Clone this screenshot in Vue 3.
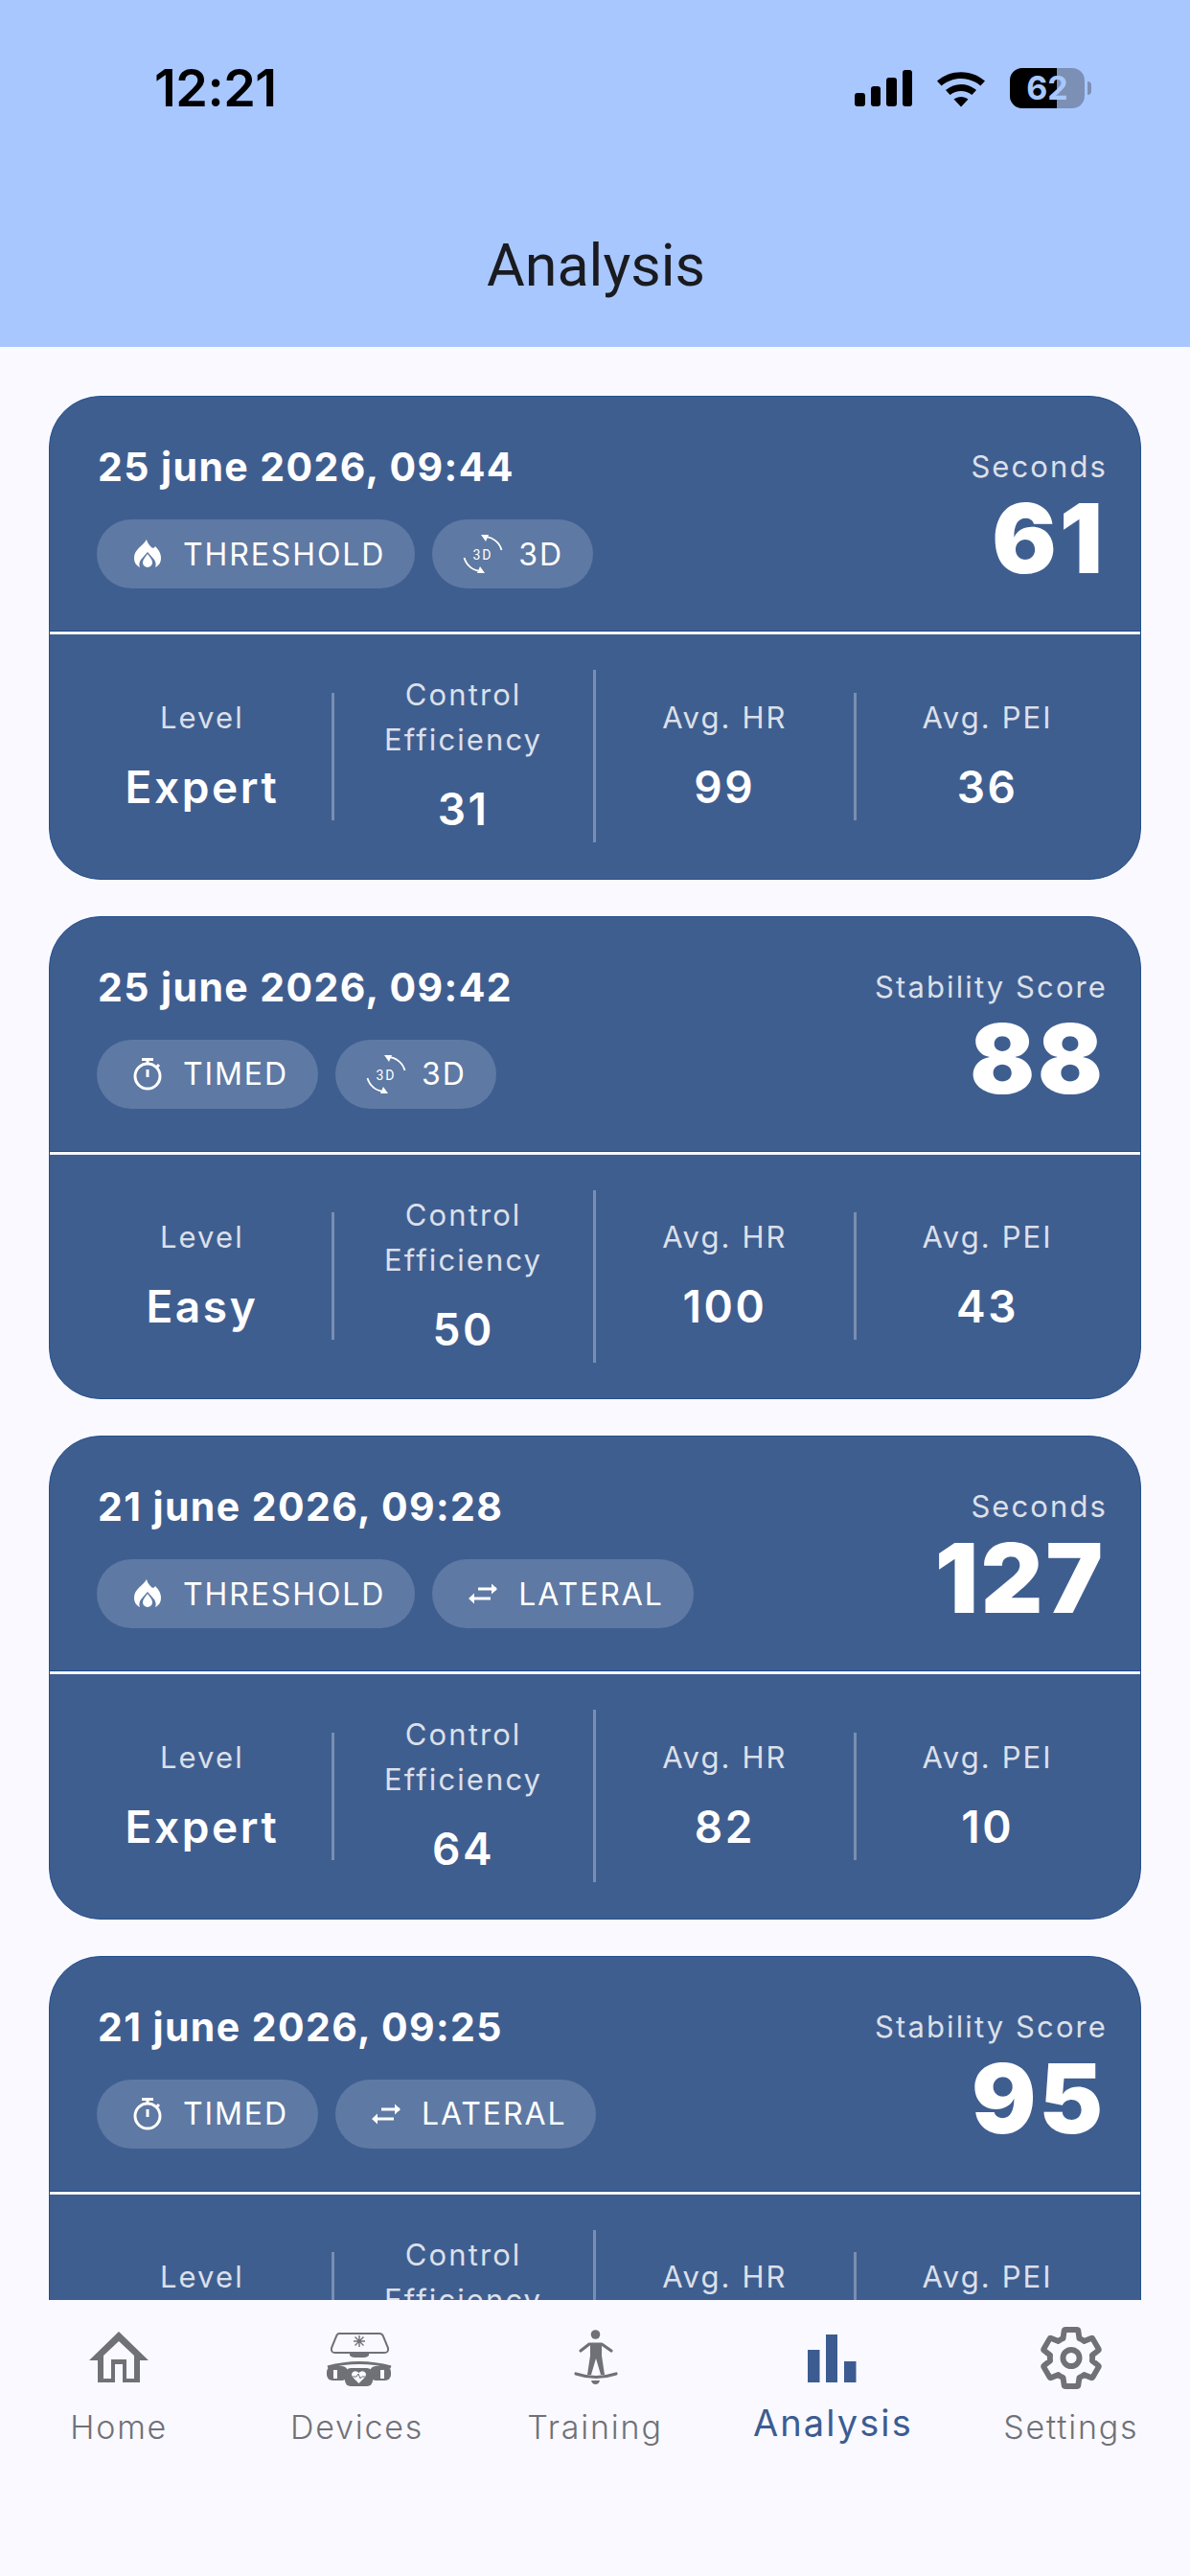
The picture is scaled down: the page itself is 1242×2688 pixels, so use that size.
<script setup>
const cards = [
  { date: '25 june 2026, 09:44', mode: 'THRESHOLD', axis: '3D', metric: 'Seconds', score: '61', level: 'Expert', ce: '31', hr: '99', pei: '36' },
  { date: '25 june 2026, 09:42', mode: 'TIMED', axis: '3D', metric: 'Stability Score', score: '88', level: 'Easy', ce: '50', hr: '100', pei: '43' },
  { date: '21 june 2026, 09:28', mode: 'THRESHOLD', axis: 'LATERAL', metric: 'Seconds', score: '127', level: 'Expert', ce: '64', hr: '82', pei: '10' },
  { date: '21 june 2026, 09:25', mode: 'TIMED', axis: 'LATERAL', metric: 'Stability Score', score: '95', level: '', ce: '', hr: '', pei: '' }
]
const tabs = ['Home', 'Devices', 'Training', 'Analysis', 'Settings']
const gear = 'M19.43 12.98c.04-.32.07-.64.07-.98s-.03-.66-.07-.98l2.11-1.65c.19-.15.24-.42.12-.64l-2-3.46c-.12-.22-.39-.3-.61-.22l-2.49 1c-.52-.4-1.08-.73-1.69-.98l-.38-2.65C14.46 2.18 14.25 2 14 2h-4c-.25 0-.46.18-.49.42l-.38 2.65c-.61.25-1.17.59-1.69.98l-2.49-1c-.23-.09-.49 0-.61.22l-2 3.46c-.13.22-.07.49.12.64l2.11 1.65c-.04.32-.07.65-.07.98s.03.66.07.98l-2.11 1.65c-.19.15-.24.42-.12.64l2 3.46c.12.22.39.3.61.22l2.49-1c.52.4 1.08.73 1.69.98l.38 2.65c.03.24.24.42.49.42h4c.25 0 .46-.18.49-.42l.38-2.65c.61-.25 1.17-.59 1.69-.98l2.49 1c.23.09.49 0 .61-.22l2-3.46c.12-.22.07-.49-.12-.64l-2.11-1.65z'
</script>

<template>
  <div class="screen">
    <header class="top">
      <div class="status">
        <span class="time">12:21</span>
        <div class="status-icons">
          <div class="signal"><i class="b1"></i><i class="b2"></i><i class="b3"></i><i class="b4"></i></div>
          <svg class="wifi" width="52" height="40" viewBox="0 0 52 40">
            <path d="M1 12.5C15 0 37 0 51 12.5l-4.6 5C34.5 7.5 17.5 7.5 5.6 17.5z" fill="#000" />
            <path d="M10 22c9.500-8 22.500-8 32 0l-4.600 5c-6.800-5.500-16-5.500-22.800 0z" fill="#000" />
            <path d="M18.500 31.500c4.500-3.500 10.500-3.500 15 0L26 39.500z" fill="#000" />
          </svg>
          <div class="battery">
            <div class="cell"><span class="charge"></span><b>62</b></div>
            <span class="nub"></span>
          </div>
        </div>
      </div>
      <h1 class="title">Analysis</h1>
    </header>

    <main class="list">
      <article v-for="c in cards" :key="c.date" class="card">
        <section class="summary">
          <div class="left">
            <div class="date">{{ c.date }}</div>
            <div class="pills">
              <div class="pill">
                <svg v-if="c.mode === 'THRESHOLD'" class="pico" viewBox="0 0 42 42">
                  <path fill="#fff" fill-rule="evenodd" d="M20 6c1 4 3 6 5 8 1.500 1.500 3 1 4-1 3 3 6 7 6 12 0 5-2 8-6 10 1-2 1-5-1-8l-7-8-7 8c-2 3-2 6-1 8-4-2-6-5-6-10C7 16 16 13 20 6z" />
                  <path fill="#fff" d="M21 21c3 4 5 6 5 9a5 5 0 0 1-10 0c0-3 2-5 5-9z" />
                </svg>
                <svg v-else-if="c.mode === 'TIMED'" class="pico" viewBox="0 0 42 42">
                  <circle cx="21" cy="23" r="13" fill="none" stroke="#fff" stroke-width="3" />
                  <path d="M15 5.500h12M21 5.500v4M33 11l-2.500 2.500M21 16v8" fill="none" stroke="#fff" stroke-width="3" />
                </svg>
                <span>{{ c.mode }}</span>
              </div>
              <div class="pill">
                <svg v-if="c.axis === '3D'" class="pico" viewBox="0 0 42 42">
                  <path d="M23 3A19 19 0 0 1 40.500 17M1.500 25A19 19 0 0 0 19 39" fill="none" stroke="#fff" stroke-width="1.800" />
                  <path d="M19 1l8 0-3 7zM23 41l-8 0 3-7z" fill="#fff" />
                  <text x="21" y="26.500" class="mini">3D</text>
                </svg>
                <svg v-else class="pico" viewBox="0 0 42 42">
                  <path d="M16 16h19M10 26h19" fill="none" stroke="#fff" stroke-width="3" />
                  <path d="M30 10.500l6 5.500-6 5.500zM12 20.500l-6 5.500 6 5.500z" fill="#fff" />
                </svg>
                <span>{{ c.axis }}</span>
              </div>
            </div>
          </div>
          <div class="right">
            <div class="metric">{{ c.metric }}</div>
            <div class="score">{{ c.score }}</div>
          </div>
        </section>
        <div class="rule"></div>
        <section class="stats">
          <div class="stat"><div class="label">Level</div><div class="value">{{ c.level }}</div></div>
          <div class="stat"><div class="label">Control<br />Efficiency</div><div class="value">{{ c.ce }}</div></div>
          <div class="stat"><div class="label">Avg. HR</div><div class="value">{{ c.hr }}</div></div>
          <div class="stat"><div class="label">Avg. PEI</div><div class="value">{{ c.pei }}</div></div>
        </section>
      </article>
    </main>

    <nav class="tabs">
      <div v-for="t in tabs" :key="t" class="tab" :class="{ active: t === 'Analysis' }">
        <svg v-if="t === 'Home'" class="tico" viewBox="0 0 100 80">
          <path fill="#707177" fill-rule="evenodd" d="M50 13l31 30h-9v23H28V43h-9zM34 62h8V42h16v20h8V38L50 23 34 38zM46 47v19h8V47z" />
        </svg>
        <svg v-else-if="t === 'Devices'" class="tico" viewBox="0 0 100 80">
          <path d="M31 15h42q3 0 4 3l5 12q1 5-4 5H27q-5 0-4-5l5-12q1-3 3-3z" fill="none" stroke="#707177" stroke-width="2" />
          <path d="M52 17v12M46 23h12M47.500 18.500l9 9M56.500 18.500l-9 9" stroke="#707177" stroke-width="1.400" />
          <path d="M42 36h20v2q-2 2-5 2H47q-3 0-5-2z" fill="#707177" />
          <path d="M19 50q33-9 66 0" fill="none" stroke="#707177" stroke-width="3" />
          <rect x="18" y="49" width="22" height="15" rx="6" fill="#707177" />
          <rect x="63" y="49" width="22" height="15" rx="6" fill="#707177" />
          <rect x="37" y="51" width="29" height="19" rx="6" fill="#707177" />
          <rect x="25" y="53" width="4" height="9" fill="#faf9ff" />
          <rect x="74" y="53" width="4" height="9" fill="#faf9ff" />
          <path d="M51.500 67l-6-6q-3-4 0-6t6 1q3-3 6-1t0 6z" fill="#faf9ff" />
          <path d="M45 60h4l2-3 2 5 1.500-2H58" fill="none" stroke="#707177" stroke-width="1" />
        </svg>
        <svg v-else-if="t === 'Training'" class="tico" viewBox="0 0 100 80">
          <circle cx="50.500" cy="16" r="4.800" fill="#707177" />
          <path d="M35 33l9-7h13l10 7" fill="none" stroke="#707177" stroke-width="3.200" stroke-linecap="round" stroke-linejoin="round" />
          <path d="M45 25h12v13l3 20h-4l-5-17-5 17h-4l3-20z" fill="#707177" />
          <path d="M30 57q21 7 42 0" fill="none" stroke="#707177" stroke-width="3.200" stroke-linecap="round" />
          <path d="M46 64h9q-1 4-4.500 4T46 64z" fill="#707177" />
        </svg>
        <svg v-else-if="t === 'Analysis'" class="tico" viewBox="0 0 100 80">
          <path d="M24 32h12.500v34H24zM43 16h12v50H43zM62 44h12.500v22H62z" fill="#3c5c91" />
        </svg>
        <svg v-else class="tico" viewBox="0 0 100 80">
          <g transform="translate(14.600 5.100) scale(2.950)" fill="none" stroke="#707177" stroke-width="2" stroke-linejoin="round">
            <path :d="gear" />
            <circle cx="12" cy="12" r="2.900" />
          </g>
        </svg>
        <span class="tlabel">{{ t }}</span>
      </div>
    </nav>
  </div>
</template>

<style scoped>
.screen {
  width: 1242px;
  height: 2688px;
  display: flex;
  flex-direction: column;
  overflow: hidden;
  background: #faf9ff;
  font-family: Inter, Roboto, sans-serif;
}
.top {
  height: 362px;
  flex: none;
  background: #a8c7ff;
  display: flex;
  flex-direction: column;
}
.status {
  display: flex;
  justify-content: space-between;
  align-items: center;
  height: 42px;
  margin-top: 71px;
  padding: 0 103px 0 161px;
}
.time {
  font: 600 54px/42px Inter, sans-serif;
  color: #000;
  letter-spacing: -0.5px;
}
.status-icons {
  display: flex;
  align-items: center;
  gap: 25px;
}
.signal {
  display: flex;
  align-items: flex-end;
  gap: 6px;
  height: 38px;
}
.signal i {
  display: block;
  width: 10.500px;
  background: #000;
  border-radius: 3px;
}
.b1 { height: 14px; }
.b2 { height: 21px; }
.b3 { height: 30px; }
.b4 { height: 38px; }
.battery {
  display: flex;
  align-items: center;
  gap: 3px;
}
.cell {
  position: relative;
  width: 78px;
  height: 42px;
  border-radius: 13px;
  overflow: hidden;
  background: #7c8fb5;
  display: flex;
  align-items: center;
  justify-content: center;
}
.charge {
  position: absolute;
  left: 0;
  top: 0;
  bottom: 0;
  width: 49px;
  background: #000;
}
.cell b {
  position: relative;
  font: 700 34px/42px Inter, sans-serif;
  color: #a8c7ff;
}
.nub {
  width: 4px;
  height: 14px;
  background: #7c8fb5;
  border-radius: 0 4px 4px 0;
}
.title {
  margin: 124px 0 0;
  padding-left: 2px;
  text-align: center;
  font: 400 61px/80px Roboto, sans-serif;
  color: #1a1b20;
}
.list {
  flex: 1;
  min-height: 0;
  overflow: hidden;
  padding: 51px 51px 0;
  display: flex;
  flex-direction: column;
  gap: 38px;
}
.card {
  flex: none;
  height: 504.5px;
  box-sizing: border-box;
  background: #3f5e90;
  border: 1px solid #234f8c;
  border-radius: 54px;
  color: #fff;
  display: flex;
  flex-direction: column;
}
.summary {
  height: 244px;
  flex: none;
  box-sizing: border-box;
  padding: 48px 34px 0 49px;
  display: flex;
  justify-content: space-between;
}
.date {
  font-size: 41px;
  font-weight: 700;
  line-height: 50px;
  letter-spacing: 1.400px;
  margin-left: 1px;
}
.pills {
  display: flex;
  gap: 18px;
  margin-top: 30px;
}
.pill {
  height: 72px;
  border-radius: 36px;
  background: #5e79a3;
  padding: 0 31px 0 32px;
  display: flex;
  align-items: center;
  gap: 16px;
  font-size: 32px;
  letter-spacing: 1.900px;
}
.pico {
  width: 42px;
  height: 42px;
  flex: none;
}
.mini {
  font: 400 14px Roboto, sans-serif;
  fill: #fff;
  text-anchor: middle;
}
.right {
  text-align: right;
}
.metric {
  font-size: 31px;
  line-height: 50px;
  letter-spacing: 2.100px;
  color: rgba(255, 255, 255, 0.82);
}
.score {
  font: 900 100px/100px Inter, sans-serif;
  margin: 0 2px 0 0;
  letter-spacing: 3px;
}
.rule {
  flex: none;
  height: 4px;
  border-top: 1px solid #1f4a8a;
  box-sizing: border-box;
  background: #f4f6fb;
}
.stats {
  flex: 1;
  padding: 0 23px 0 24px;
  display: grid;
  grid-template-columns: repeat(4, 1fr);
  align-items: center;
}
.stat {
  text-align: center;
  border-right: 3px solid rgba(255, 255, 255, 0.3);
}
.stat:last-child {
  border-right: 0;
}
.label {
  padding-top: 2px;
  font-size: 31px;
  line-height: 47px;
  letter-spacing: 2.100px;
  color: rgba(255, 255, 255, 0.82);
}
.value {
  font-size: 46px;
  font-weight: 600;
  line-height: 69px;
  min-height: 69px;
  margin-top: 15px;
  letter-spacing: 2.600px;
}
.tabs {
  flex: none;
  height: 288px;
  background: #faf9ff;
  display: grid;
  grid-template-columns: repeat(5, 1fr);
}
.tab {
  display: flex;
  flex-direction: column;
  align-items: center;
  padding-top: 20px;
  color: #707177;
}
.tico {
  width: 100px;
  height: 80px;
  flex: none;
}
.tlabel {
  font-size: 34px;
  font-weight: 300;
  line-height: 44px;
  margin-top: 11px;
  letter-spacing: 1.800px;
}
.active {
  color: #3c5c91;
}
.active .tlabel {
  font-size: 38px;
  font-weight: 400;
  margin-top: 6px;
  letter-spacing: 2.100px;
}
</style>
